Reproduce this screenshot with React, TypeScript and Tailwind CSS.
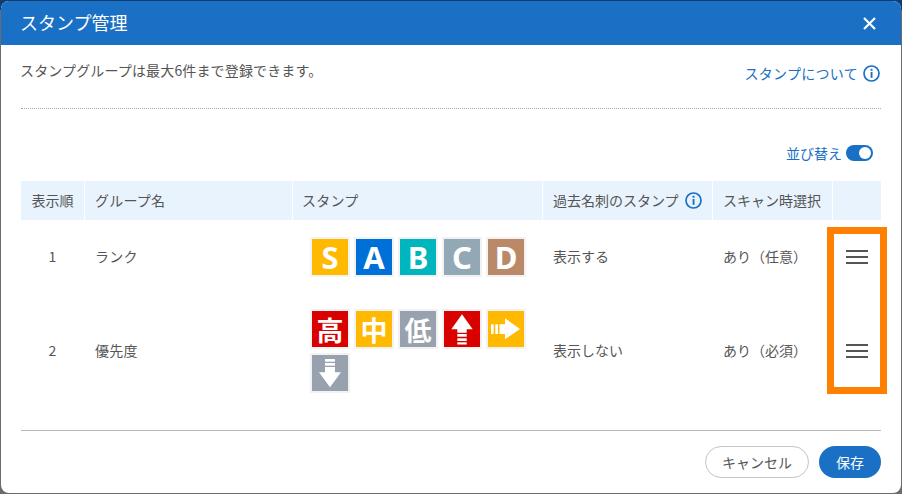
const font = '"Noto Sans CJK JP", "Noto Sans", sans-serif';

function InfoIcon({ className }: { className?: string }) {
  return (
    <svg viewBox="0 0 17 17" width="17" height="17" className={className} fill="none">
      <circle cx="8.5" cy="8.5" r="7.5" stroke="#1a70c5" strokeWidth="1.7" />
      <rect x="7.6" y="7" width="1.9" height="5.8" fill="#1a70c5" />
      <rect x="7.6" y="3.8" width="1.9" height="2" fill="#1a70c5" />
    </svg>
  );
}

function Stamp({ bg, children }: { bg: string; children: React.ReactNode }) {
  return (
    <div className="w-10 h-10 border-2 border-[#f2f2f2] flex items-center justify-center">
      <div className={`w-9 h-9 flex items-center justify-center text-white font-bold ${bg}`}>{children}</div>
    </div>
  );
}

const Letter = ({ c }: { c: string }) => (
  <span className="text-[31px] leading-none font-bold font-['Noto_Sans',sans-serif]">{c}</span>
);
const Kanji = ({ c }: { c: string }) => <span className="text-[27px] leading-none font-bold">{c}</span>;

function Row({
  no,
  name,
  stamps,
  past,
  scan,
}: {
  no: string;
  name: string;
  stamps: React.ReactNode;
  past: string;
  scan: string;
}) {
  return (
    <div className="grid grid-cols-[63px_207px_249px_169px_119px_48px] gap-x-px items-center text-[14px] leading-5 text-[#555]">
      <div className="text-center pb-[2px]">{no}</div>
      <div className="pl-[10px] pb-[2px] tracking-[0.2px]">{name}</div>
      <div className="pl-[17px] py-4 flex flex-wrap gap-1">{stamps}</div>
      <div className="pl-[10px] pb-[2px]">{past}</div>
      <div className="pl-[10px] pb-[2px]">{scan}</div>
      <div className="flex justify-center">
        <div className="w-[22px] flex flex-col gap-1">
          <div className="h-[2px] bg-[#555]" />
          <div className="h-[2px] bg-[#555]" />
          <div className="h-[2px] bg-[#555]" />
        </div>
      </div>
    </div>
  );
}

export default function App() {
  return (
    <div
      className="relative w-[902px] h-[494px] overflow-hidden p-px bg-[linear-gradient(#0f3d6e_0_10px,#6b6b6b_10px)]"
      style={{ fontFamily: font }}
    >
      <div className="h-[492px] bg-white rounded-[8px] overflow-hidden flex flex-col">
        <header className="h-11 shrink-0 bg-[#1a70c5] flex items-center justify-between pl-[19px] pr-[25px] text-white">
          <h1 className="text-[18px] leading-6 font-normal pb-[2px]">スタンプ管理</h1>
          <svg viewBox="0 0 13 13" width="13" height="13" fill="none">
            <path d="M1 1 L12 12 M12 1 L1 12" stroke="#fff" strokeWidth="2.2" />
          </svg>
        </header>

        <div className="flex-1 px-5 flex flex-col">
          <div className="h-[64px] shrink-0 border-b border-dotted border-[#aaa] flex justify-between pt-[15px]">
            <p className="text-[14px] leading-5 text-[#555] -ml-px tracking-[0.15px]">スタンプグループは最大6件まで登録できます。</p>
            <div className="flex items-start gap-[5px] pt-[3px] pr-px">
              <span className="text-[14px] leading-5 text-[#1a70c5] tracking-[0.3px]">スタンプについて</span>
              <InfoIcon className="mt-[2px]" />
            </div>
          </div>

          <div className="mt-[36px] h-4 flex items-center justify-end gap-1 pr-2 text-[14px] text-[#1a70c5]">
            <span>並び替え</span>
            <div className="w-[27px] h-4 rounded-full bg-[#1a70c5] flex items-center justify-end pr-[2px]">
              <div className="w-3 h-3 rounded-full bg-white" />
            </div>
          </div>

          <div className="mt-[20px] grid grid-cols-[63px_207px_249px_169px_119px_48px] gap-x-px h-[39px] text-[14px] text-[#555]">
            <div className="bg-[#e8f3fd] flex items-center justify-center">表示順</div>
            <div className="bg-[#e8f3fd] flex items-center pl-[10px] tracking-[0.2px]">グループ名</div>
            <div className="bg-[#e8f3fd] flex items-center pl-[9px] tracking-[0.2px]">スタンプ</div>
            <div className="bg-[#e8f3fd] flex items-center pl-[10px] gap-[6px]">
              過去名刺のスタンプ
              <InfoIcon />
            </div>
            <div className="bg-[#e8f3fd] flex items-center pl-[10px]">スキャン時選択</div>
            <div className="bg-[#e8f3fd]" />
          </div>

          <div className="mt-px">
            <Row
              no="1"
              name="ランク"
              past="表示する"
              scan="あり（任意）"
              stamps={
                <>
                  <Stamp bg="bg-[#ffb900]"><Letter c="S" /></Stamp>
                  <Stamp bg="bg-[#0070d9]"><Letter c="A" /></Stamp>
                  <Stamp bg="bg-[#00b6be]"><Letter c="B" /></Stamp>
                  <Stamp bg="bg-[#92a8b5]"><Letter c="C" /></Stamp>
                  <Stamp bg="bg-[#ba8a68]"><Letter c="D" /></Stamp>
                </>
              }
            />
            <Row
              no="2"
              name="優先度"
              past="表示しない"
              scan="あり（必須）"
              stamps={
                <>
                  <Stamp bg="bg-[#d90000]"><Kanji c="高" /></Stamp>
                  <Stamp bg="bg-[#ffb900]"><Kanji c="中" /></Stamp>
                  <Stamp bg="bg-[#98a2ae]"><Kanji c="低" /></Stamp>
                  <Stamp bg="bg-[#d90000]">
                    <svg viewBox="0 0 36 36" width="36" height="36" fill="#fff">
                      <path d="M18 3.3 L28.7 18.3 L22.7 18.3 L22.7 21.7 L13.3 21.7 L13.3 18.3 L7.3 18.3 Z" />
                      <rect x="13.3" y="23" width="9.4" height="2.7" />
                      <rect x="13.3" y="27.3" width="9.4" height="2.7" />
                      <rect x="13.3" y="31.3" width="9.4" height="2.2" />
                    </svg>
                  </Stamp>
                  <Stamp bg="bg-[#ffb900]">
                    <svg viewBox="0 0 36 36" width="36" height="36" fill="#fff">
                      <path d="M32 18 L17 7.3 L17 13.3 L11.5 13.3 L11.5 23 L17 23 L17 28.3 Z" />
                      <rect x="3" y="13.3" width="2.7" height="9.7" />
                      <rect x="7.3" y="13.3" width="2.7" height="9.7" />
                    </svg>
                  </Stamp>
                  <Stamp bg="bg-[#98a2ae]">
                    <svg viewBox="0 0 36 36" width="36" height="36" fill="#fff">
                      <path d="M18 32.3 L29 17.3 L23 17.3 L23 12 L13 12 L13 17.3 L7 17.3 Z" />
                      <rect x="13" y="4" width="10" height="2.7" />
                      <rect x="13" y="8" width="10" height="2.7" />
                    </svg>
                  </Stamp>
                </>
              }
            />
          </div>

          <div className="mt-[21px] border-t border-[#b8b8c0] pt-[15px] flex justify-end gap-[10px]">
            <button className="w-[104px] h-8 rounded-full border border-[#c4c4cc] bg-white text-[14px] text-[#555]">キャンセル</button>
            <button className="w-[62px] h-8 rounded-full bg-[#1a70c5] text-[14px] text-white">保存</button>
          </div>
        </div>
      </div>

      <div className="absolute left-[827px] top-[227px] w-[60px] h-[167px] border-[7px] border-[#ff8000]" />
    </div>
  );
}
